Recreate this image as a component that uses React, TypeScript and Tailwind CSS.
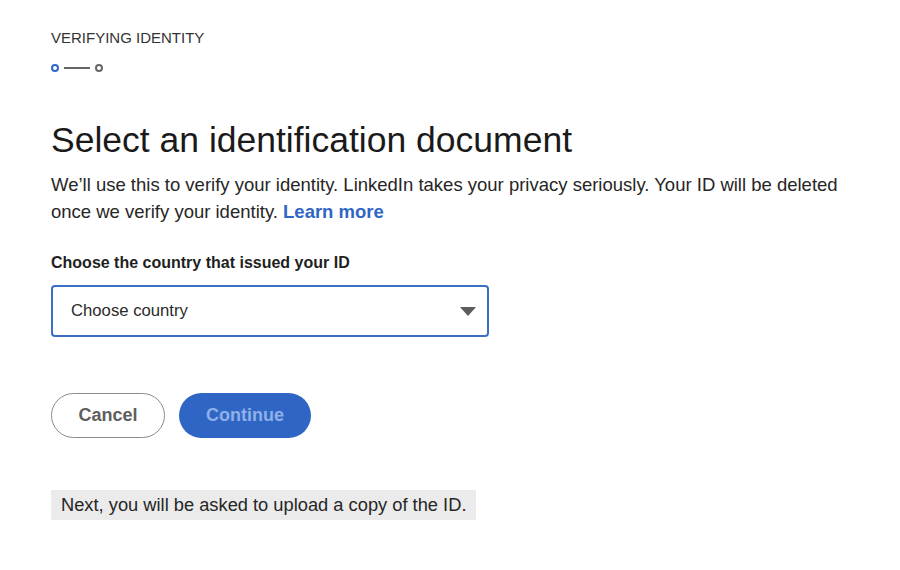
export default function App() {
    return (
        <div className="min-h-screen w-full bg-white font-['Liberation_Sans',Arial,sans-serif] text-[#1f1f1f]">
            <div className="flex flex-col pl-[51px] pt-[28px]">
                {/* Step header */}
                <p className="text-[15px] leading-[19px] text-[#333]">VERIFYING IDENTITY</p>
                <div className="mt-[17px] flex items-center">
                    <span className="h-[8px] w-[8px] rounded-full border-2 border-[#2f66c6]" />
                    <span className="mx-[5px] h-[2px] w-[26px] bg-[#666]" />
                    <span className="h-[8px] w-[8px] rounded-full border-2 border-[#666]" />
                </div>

                <h1 className="mt-[46px] text-[35.5px] leading-[44px] text-[#1a1a1a]">Select an identification document</h1>
                <p className="mt-[9px] max-w-[820px] text-[18.5px] leading-[27px] text-[#262626]">
                    We’ll use this to verify your identity. LinkedIn takes your privacy seriously. Your ID will be deleted once we verify your identity.{" "}
                    <a href="#" className="font-bold text-[#2f66c6]">Learn more</a>
                </p>

                <label className="mt-[27px] text-[16px] font-bold leading-[22px] text-[#1f1f1f]">Choose the country that issued your ID</label>
                <div className="mt-[11px] flex h-[52px] w-[438px] items-center justify-between rounded-[4px] border-2 border-[#3b6fc4] pl-[18px] pr-[11px]">
                    <span className="text-[16.7px] text-[#2b2b2b]">Choose country</span>
                    <svg width="16" height="9" viewBox="0 0 16 9"><path d="M0 0h16L8 9z" fill="#5c5c5c" /></svg>
                </div>

                <div className="mt-[56px] flex items-center gap-[14px]">
                    <button className="h-[45px] w-[114px] rounded-full border border-[#8c8c8c] text-[18px] font-bold text-[#5e5e5e]">Cancel</button>
                    <button className="h-[45px] w-[132px] rounded-full bg-[#2f66c6] text-[18px] font-bold text-[#8fb0e8]">Continue</button>
                </div>

                <div className="mt-[52px] flex">
                    <p className="bg-[#ebebeb] px-[10px] py-[4px] text-[18.3px] leading-[22px] text-[#262626]">Next, you will be asked to upload a copy of the ID.</p>
                </div>
            </div>
        </div>
    );
}
